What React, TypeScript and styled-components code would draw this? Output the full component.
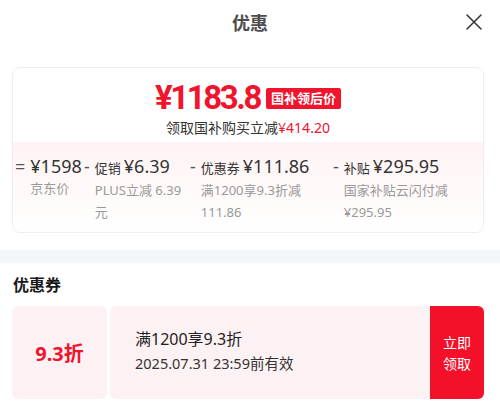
import React from 'react';
import styled, { createGlobalStyle } from 'styled-components';

const GlobalStyle = createGlobalStyle`
  body {
    margin: 0;
    background: #fff;
    font-family: "Noto Sans", "Noto Sans CJK SC", sans-serif;
    color: #333;
  }
`;

const Sheet = styled.div`
  width: 500px;
  height: 412px;
  overflow: hidden;
  background: #fff;
`;

const Header = styled.div`
  position: relative;
  height: 44px;
  display: flex;
  align-items: center;
  justify-content: center;
`;

const Title = styled.div`
  font-size: 18px;
  font-weight: 700;
  color: #4d4d4d;
`;

const CloseBtn = styled.button`
  position: absolute;
  right: 16px;
  top: 12px;
  width: 20px;
  height: 20px;
  padding: 0;
  border: none;
  background: none;
  display: flex;
  align-items: center;
  justify-content: center;
`;

const PriceCard = styled.div`
  margin: 23px 16px 0 12px;
  border: 1px solid #eeeeee;
  border-radius: 8px;
`;

const PriceTop = styled.div`
  height: 74px;
  display: flex;
  flex-direction: column;
  align-items: center;
  padding-top: 12px;
  box-sizing: border-box;
`;

const PriceLine = styled.div`
  display: flex;
  align-items: center;
  gap: 6px;
  height: 36px;
`;

const BigPrice = styled.span`
  font-family: Roboto, "Noto Sans", sans-serif;
  font-size: 33px;
  font-weight: 700;
  color: #f0142d;
  letter-spacing: -2.4px;
  line-height: 36px;
`;

const Tag = styled.span`
  background: #f0142d;
  color: #fff;
  font-size: 13px;
  font-weight: 700;
  line-height: 21px;
  padding: 0 5px;
  border-radius: 2px;
`;

const SaveLine = styled.div`
  margin-top: 2px;
  font-size: 14px;
  line-height: 20px;
  color: #333;
`;

const Red = styled.span`
  color: #f0142d;
`;

const Breakdown = styled.div`
  display: flex;
  padding: 13px 0 9px 2px;
  border-radius: 0 0 8px 8px;
  background: linear-gradient(180deg, #fff3f4 0%, #fffafa 60%, #ffffff 100%);
`;

const Item = styled.div<{ $w?: number }>`
  display: flex;
  gap: 5px;
  ${({ $w }) => ($w ? `width: ${$w}px; flex: none;` : 'flex: 1;')}
`;

const Sign = styled.span`
  font-size: 18px;
  line-height: 22px;
  color: #555;
`;

const ItemBody = styled.div<{ $pr?: number }>`
  flex: 1;
  min-width: 0;
  padding-right: ${({ $pr }) => $pr ?? 0}px;
`;

const ItemTitle = styled.div`
  display: flex;
  align-items: baseline;
  gap: 3px;
  line-height: 22px;
  white-space: nowrap;
`;

const ItemLabel = styled.span`
  font-size: 13px;
  color: #333;
`;

const ItemValue = styled.span`
  font-size: 18px;
  color: #333;
`;

const ItemDesc = styled.div`
  font-size: 13px;
  line-height: 22px;
  color: #999;
`;

const Band = styled.div`
  margin-top: 17px;
  height: 13px;
  background: #f5f6f9;
`;

const SectionTitle = styled.div`
  padding: 11px 0 0 13px;
  font-size: 16px;
  font-weight: 700;
  line-height: 22px;
  color: #1a1a1a;
`;

const Coupon = styled.div`
  margin: 10px 16px 0 12px;
  height: 93px;
  display: flex;
  gap: 3px;
`;

const CouponLeft = styled.div`
  width: 95px;
  flex: none;
  border-radius: 6px;
  background: #fdf2f3;
  display: flex;
  align-items: center;
  justify-content: center;
  font-size: 20px;
  font-weight: 700;
  color: #f0142d;
`;

const CouponMain = styled.div`
  flex: 1;
  display: flex;
  border-radius: 6px;
  overflow: hidden;
`;

const CouponInfo = styled.div`
  flex: 1;
  background: #fdf2f3;
  padding: 0 0 4px 25px;
  display: flex;
  flex-direction: column;
  justify-content: center;
  gap: 3px;
`;

const CouponRule = styled.div`
  font-size: 16px;
  line-height: 22px;
  color: #222;
`;

const CouponDate = styled.div`
  font-size: 14.5px;
  line-height: 20px;
  color: #333;
`;

const TakeBtn = styled.button`
  width: 54px;
  flex: none;
  border: none;
  background: #f5102a;
  color: #fff;
  font-family: inherit;
  font-size: 14px;
  line-height: 21px;
  padding: 0 12px;
  text-align: center;
`;

const items = [
  { sign: '=', label: '', value: '¥1598', desc: '京东价', w: 69 },
  { sign: '-', label: '促销', value: '¥6.39', desc: 'PLUS立减 6.39 元', w: 106 },
  { sign: '-', label: '优惠券', value: '¥111.86', desc: '满1200享9.3折减 111.86', w: 143, pr: 6 },
  { sign: '-', label: '补贴', value: '¥295.95', desc: '国家补贴云闪付减 ¥295.95' },
];

export default function App() {
  return (
    <Sheet>
      <GlobalStyle />
      <Header>
        <Title>优惠</Title>
        <CloseBtn aria-label="关闭">
          <svg width="16" height="16" viewBox="0 0 16 16">
            <path d="M1 1 15 15 M15 1 1 15" stroke="#333" strokeWidth="1.5" strokeLinecap="round" />
          </svg>
        </CloseBtn>
      </Header>

      <PriceCard>
        <PriceTop>
          <PriceLine>
            <BigPrice>¥1183.8</BigPrice>
            <Tag>国补领后价</Tag>
          </PriceLine>
          <SaveLine>
            领取国补购买立减<Red>¥414.20</Red>
          </SaveLine>
        </PriceTop>
        <Breakdown>
          {items.map((it) => (
            <Item key={it.value} $w={it.w}>
              <Sign>{it.sign}</Sign>
              <ItemBody $pr={it.pr}>
                <ItemTitle>
                  {it.label && <ItemLabel>{it.label}</ItemLabel>}
                  <ItemValue>{it.value}</ItemValue>
                </ItemTitle>
                <ItemDesc>{it.desc}</ItemDesc>
              </ItemBody>
            </Item>
          ))}
        </Breakdown>
      </PriceCard>

      <Band />

      <SectionTitle>优惠券</SectionTitle>
      <Coupon>
        <CouponLeft>9.3折</CouponLeft>
        <CouponMain>
          <CouponInfo>
            <CouponRule>满1200享9.3折</CouponRule>
            <CouponDate>2025.07.31 23:59前有效</CouponDate>
          </CouponInfo>
          <TakeBtn>立即领取</TakeBtn>
        </CouponMain>
      </Coupon>
    </Sheet>
  );
}
